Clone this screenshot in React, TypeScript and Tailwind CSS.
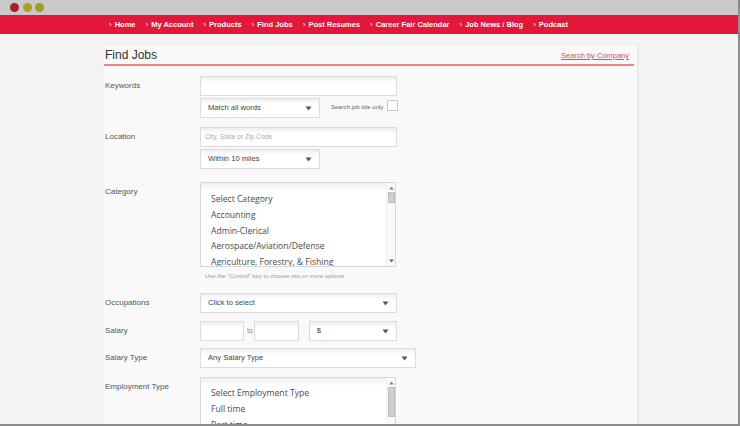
import React from "react";

const navItems = [
  "Home",
  "My Account",
  "Products",
  "Find Jobs",
  "Post Resumes",
  "Career Fair Calendar",
  "Job News / Blog",
  "Podcast",
];

function Arrow() {
  return (
    <svg width="7" height="5" viewBox="0 0 7 5" className="shrink-0">
      <path d="M0.5 0.5 L6.5 0.5 L3.5 4.5 Z" fill="#555" />
    </svg>
  );
}

function Select({ w, text }: { w: string; text: string }) {
  return (
    <div
      className={`${w} h-[20px] border border-[#dcdcdc] bg-white shadow-[inset_0_5px_5px_-3px_rgba(0,0,0,0.09)] flex items-center justify-between pl-[7px] pr-[7px] text-[7.6px] text-[#444]`}
    >
      <span>{text}</span>
      <Arrow />
    </div>
  );
}

function Input({ w, placeholder }: { w: string; placeholder?: string }) {
  return (
    <div
      className={`${w} h-[20px] border border-[#dcdcdc] bg-white shadow-[inset_0_5px_5px_-3px_rgba(0,0,0,0.09)] flex items-center pl-[4px] text-[6.7px] text-[#aaa]`}
    >
      {placeholder}
    </div>
  );
}

function ListBox({
  items,
  pt,
  thumb,
}: {
  items: string[];
  pt: string;
  thumb: string;
}) {
  return (
    <div className="w-[196px] h-[85px] border border-[#d8d8d8] bg-white shadow-[inset_0_6px_6px_-3px_rgba(0,0,0,0.08)] flex overflow-hidden">
      <div
        className={`flex-1 ${pt} pl-[10px] text-[8.6px] leading-[15.75px] text-[#4a4a4a]`}
        style={{ fontFamily: '"Open Sans", "Noto Sans", sans-serif' }}
      >
        {items.map((t) => (
          <div key={t} className="whitespace-nowrap">
            {t}
          </div>
        ))}
      </div>
      <div className="w-[9px] flex flex-col items-center border-l border-[#f0f0f0] bg-[#fafafa]">
        <svg width="5" height="4" viewBox="0 0 5 4" className="mt-[3px]">
          <path d="M0 3.5 L5 3.5 L2.5 0.5 Z" fill="#888" />
        </svg>
        <div className={`w-[7px] ${thumb} mt-[2px] bg-[#cfcfcf] border border-[#bdbdbd]`} />
        <div className="flex-1" />
        <svg width="5" height="4" viewBox="0 0 5 4" className="mb-[3px]">
          <path d="M0 0.5 L5 0.5 L2.5 3.5 Z" fill="#666" />
        </svg>
      </div>
    </div>
  );
}

export default function App() {
  return (
    <div
      className="w-[740px] h-[426px] overflow-hidden flex flex-col bg-[#f3f3f3] border-r-2 border-b-2 border-[#8c8c8c]"
      style={{ fontFamily: '"Liberation Sans", Arial, sans-serif' }}
    >
      {/* title bar */}
      <div className="h-[15px] shrink-0 bg-[#c9c9c9] flex items-center pl-[10px] gap-[3.5px]">
        <div className="w-[9px] h-[9px] rounded-full bg-[#a7202a]" />
        <div className="w-[9px] h-[9px] rounded-full bg-[#a4a51e]" />
        <div className="w-[9px] h-[9px] rounded-full bg-[#9c9f1d]" />
      </div>
      {/* nav */}
      <div className="h-[19px] shrink-0 bg-[#e3173a] flex items-center pl-[109px] gap-[10px] text-white text-[7.5px] font-bold">
        {navItems.map((n) => (
          <div key={n} className="flex items-center gap-[3px] whitespace-nowrap">
            <span className="font-normal text-[8px]">›</span>
            <span>{n}</span>
          </div>
        ))}
      </div>
      {/* panel */}
      <div className="ml-[102px] mt-[10px] w-[537px] flex-1 bg-[#f9f9f9] border-t border-l border-r-2 border-[#ececec]">
        <div className="ml-[1px] mr-[3px] h-[21px] pt-[3px] border-b-2 border-[#f08589] flex justify-between">
          <span className="pl-[1px] text-[12px] leading-[15px] text-[#333]">Find Jobs</span>
          <span className="pr-[5px] text-[7.5px] leading-[15px] text-[#e8485a] underline">
            Search by Company
          </span>
        </div>

        <div className="pl-[2px] text-[8px] text-[#555]">
          {/* Keywords */}
          <div className="flex mt-[10px]">
            <div className="w-[95px] leading-[19px]">Keywords</div>
            <div className="flex flex-col">
              <Input w="w-[197px]" />
              <div className="flex mt-[2px]">
                <Select w="w-[120px]" text="Match all words" />
                <span className="ml-[11px] mt-[5px] text-[6px] leading-[8px] text-[#666]">
                  Search job title only
                </span>
                <div className="ml-[4px] mt-[2px] w-[11px] h-[11px] border border-[#c8c8c8] bg-white" />
              </div>
            </div>
          </div>

          {/* Location */}
          <div className="flex mt-[9px]">
            <div className="w-[95px] leading-[20px]">Location</div>
            <div className="flex flex-col">
              <Input w="w-[197px]" placeholder="City, State or Zip Code" />
              <div className="mt-[2px]">
                <Select w="w-[120px]" text="Within 10 miles" />
              </div>
            </div>
          </div>

          {/* Category */}
          <div className="flex mt-[13px]">
            <div className="w-[95px] leading-[20px]">Category</div>
            <div className="flex flex-col">
              <ListBox
                pt="pt-[9px]"
                thumb="h-[11px]"
                items={[
                  "Select Category",
                  "Accounting",
                  "Admin-Clerical",
                  "Aerospace/Aviation/Defense",
                  "Agriculture, Forestry, & Fishing",
                ]}
              />
              <div className="mt-[5px] pl-[5px] text-[6px] leading-[8px] text-[#999]">
                Use the "Control" key to choose two or more options.
              </div>
            </div>
          </div>

          {/* Occupations */}
          <div className="flex mt-[13px]">
            <div className="w-[95px] leading-[20px]">Occupations</div>
            <Select w="w-[197px]" text="Click to select" />
          </div>

          {/* Salary */}
          <div className="flex mt-[8px]">
            <div className="w-[95px] leading-[20px]">Salary</div>
            <div className="flex items-center">
              <Input w="w-[44px]" />
              <span className="ml-[3px] mr-[1px] text-[7px] text-[#888]">to</span>
              <Input w="w-[45px]" />
              <div className="ml-[10px]">
                <Select w="w-[88px]" text="$" />
              </div>
            </div>
          </div>

          {/* Salary Type */}
          <div className="flex mt-[7px]">
            <div className="w-[95px] leading-[20px]">Salary Type</div>
            <Select w="w-[216px]" text="Any Salary Type" />
          </div>

          {/* Employment Type */}
          <div className="flex mt-[9px]">
            <div className="w-[95px] leading-[19px]">Employment Type</div>
            <ListBox
              pt="pt-[8px]"
              thumb="h-[30px]"
              items={["Select Employment Type", "Full time", "Part time", "Contract"]}
            />
          </div>
        </div>
      </div>
    </div>
  );
}
